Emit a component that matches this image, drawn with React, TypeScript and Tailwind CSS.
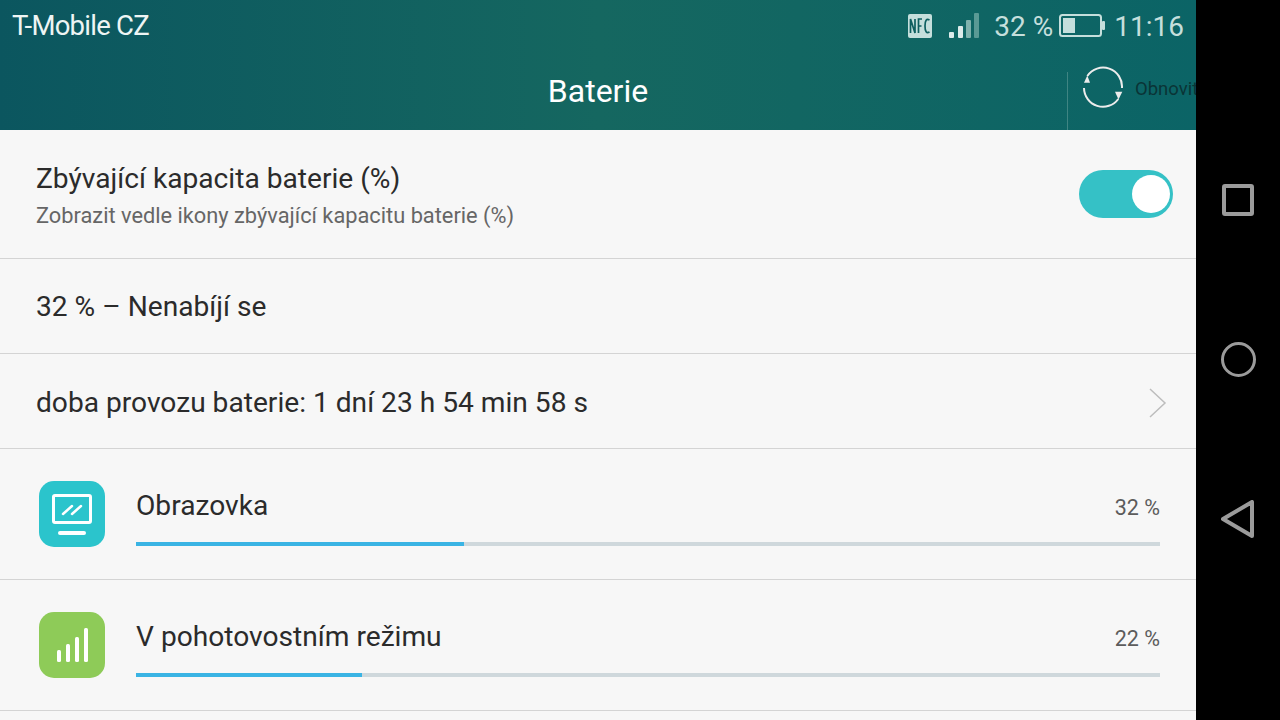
const font = "font-['Roboto',sans-serif]";

function Row({ children, h, className = "" }: { children: React.ReactNode; h: string; className?: string }) {
  return <div className={`${h} flex items-center border-b border-[#d4d4d4] pl-9 ${className}`}>{children}</div>;
}

function Usage({ name, pct, fill, icon }: { name: string; pct: number; fill: string; icon: React.ReactNode }) {
  return (
    <div className="h-[131px] flex border-b border-[#d4d4d4] pl-[39px] pr-9">
      <div className="mt-8 w-[66px] h-[66px] shrink-0">{icon}</div>
      <div className="ml-[31px] flex-1">
        <div className="flex justify-between mt-[37px] h-[40px] items-center">
          <span className="text-[28.15px] text-[#2b2b2b]">{name}</span>
          <span className="text-[21.5px] text-[#5c5c5c] mt-[5px]">{pct} %</span>
        </div>
        <div className="h-1 mt-4 bg-[#cfd8dc]">
          <div className="h-1 bg-[#3ab4e4]" style={{ width: fill }} />
        </div>
      </div>
    </div>
  );
}

export default function App() {
  return (
    <div className={`${font} w-[1280px] h-[720px] overflow-hidden flex bg-black`}>
      <div className="w-[1196px] h-[720px] overflow-hidden flex flex-col bg-[#f7f7f7]">
        <header className="h-[130px] shrink-0 bg-gradient-to-r from-[#0b565f] via-[#156760] to-[#0b6466] flex flex-col">
          <div className="h-[52px] flex items-center pl-3 pr-3 text-[#c5dfdc]">
            <span className="text-[27.5px] tracking-[-0.75px] text-[#eef5f4]">T-Mobile CZ</span>
            <div className="ml-auto flex items-center">
              <svg width="24" height="24" viewBox="0 0 24 24" className="mr-[17px]">
                <rect width="24" height="24" rx="2" fill="#c5dfdc" />
                <path d="M2.5 19V5L7 19V5M10.5 19V5H14M10.5 12H13.5M21.5 6Q17 3.5 17 12T21.5 18" fill="none" stroke="#0e5f60" strokeWidth="1.7" />
              </svg>
              <svg width="30" height="26" viewBox="0 0 30 26" className="mr-[15px]">
                <rect x="0" y="19" width="5" height="6" rx="1" fill="#dcebea" />
                <rect x="9" y="13" width="5" height="12" rx="1" fill="#dcebea" />
                <rect x="17" y="7" width="5" height="18" rx="1" fill="#7fb2ad" />
                <rect x="25" y="0" width="5" height="25" rx="1" fill="#5a9a95" />
              </svg>
              <span className="text-[28px] mt-[1px]">32 %</span>
              <svg width="46" height="24" viewBox="0 0 46 24" className="ml-[6px] mr-[9px]">
                <rect x="1" y="1" width="41" height="21" rx="2.5" fill="none" stroke="#c5dfdc" strokeWidth="2" />
                <rect x="4" y="4" width="12" height="15" fill="#c5dfdc" />
                <rect x="43" y="7" width="3" height="9" rx="1" fill="#c5dfdc" />
              </svg>
              <span className="text-[28px] mt-[1px]">11:16</span>
            </div>
          </div>
          <div className="flex-1 flex">
            <div className="flex-1 flex items-center justify-center pb-[1px] pl-[129px]">
              <span className="text-[32px] text-white">Baterie</span>
            </div>
            <div className="w-[129px] mt-[14px] overflow-hidden flex items-start whitespace-nowrap">
              <div className="w-px h-[58px] mt-[6px] bg-[#3f8583] shrink-0" />
              <svg width="42" height="42" viewBox="0 0 42 42" className="ml-[14px] shrink-0">
                <path d="M5.3 10A19 19 0 0 1 40 22" fill="none" stroke="#ececec" strokeWidth="2" />
                <path d="M36.3 33A19 19 0 0 1 2 22" fill="none" stroke="#ececec" strokeWidth="2" />
                <path d="M5.3 9.5L2 16.7H8Z" fill="#ececec" />
                <path d="M36.5 33.5L33 25.7H40.3Z" fill="#ececec" />
              </svg>
              <span className="ml-[11px] mt-[6px] text-[18.5px] leading-[34px] text-[#0a3436]">Obnovit</span>
            </div>
          </div>
        </header>
        <Row h="h-[129px]" className="justify-between pr-[23px]">
          <div>
            <div className="text-[28.15px] leading-[36px] mt-[3px] text-[#2b2b2b]">Zbývající kapacita baterie (%)</div>
            <div className="text-[21.8px] leading-[30px] mt-[4px] text-[#666666]">Zobrazit vedle ikony zbývající kapacitu baterie (%)</div>
          </div>
          <div className="w-[94px] h-12 rounded-full bg-[#35c1c6] flex items-center justify-end pr-[3px]">
            <div className="w-[38px] h-[38px] rounded-full bg-white" />
          </div>
        </Row>
        <Row h="h-[95px]"><span className="text-[28.15px] mt-[3px] text-[#2b2b2b]">32 % – Nenabíjí se</span></Row>
        <Row h="h-[95px]" className="justify-between pr-[29px]">
          <span className="text-[28.15px] mt-[5px] text-[#2b2b2b]">doba provozu baterie: 1 dní 23 h 54 min 58 s</span>
          <svg width="18" height="30" viewBox="0 0 18 30" className="mt-[3px]"><path d="M1 1L16 15L1 29" fill="none" stroke="#bdbdbd" strokeWidth="1.5" /></svg>
        </Row>
        <Usage name="Obrazovka" pct={32} fill="32%" icon={
          <svg width="66" height="66" viewBox="0 0 66 66">
            <rect width="66" height="66" rx="15" fill="#2bc4cc" />
            <rect x="14.5" y="14.5" width="37" height="27" rx="1.5" fill="none" stroke="#fff" strokeWidth="3" />
            <path d="M24 33L33 25M33 33L42 25" stroke="#fff" strokeWidth="2.5" strokeLinecap="round" />
            <rect x="19" y="50" width="28" height="4" rx="2" fill="#fff" />
          </svg>
        } />
        <Usage name="V pohotovostním režimu" pct={22} fill="22.1%" icon={
          <svg width="66" height="66" viewBox="0 0 66 66">
            <rect width="66" height="66" rx="15" fill="#8ecb58" />
            <rect x="18" y="38" width="4" height="12" rx="1.5" fill="#fff" />
            <rect x="27" y="32" width="4" height="18" rx="1.5" fill="#fff" />
            <rect x="36" y="25" width="4" height="25" rx="1.5" fill="#fff" />
            <rect x="45" y="16" width="4" height="34" rx="1.5" fill="#fff" />
          </svg>
        } />
      </div>
      <div className="w-[84px] h-[720px] flex flex-col items-center pt-[184px]">
        <div className="w-8 h-8 border-4 rounded-[3px] border-[#9b9b9b]" />
        <div className="w-[35px] h-[35px] mt-[126px] border-[3px] rounded-full border-[#9b9b9b]" />
        <svg width="34" height="38" viewBox="0 0 34 38" className="mt-[123px]"><path d="M2 19L31 2V36Z" fill="none" stroke="#9b9b9b" strokeWidth="4" strokeLinejoin="round" /></svg>
      </div>
    </div>
  );
}
